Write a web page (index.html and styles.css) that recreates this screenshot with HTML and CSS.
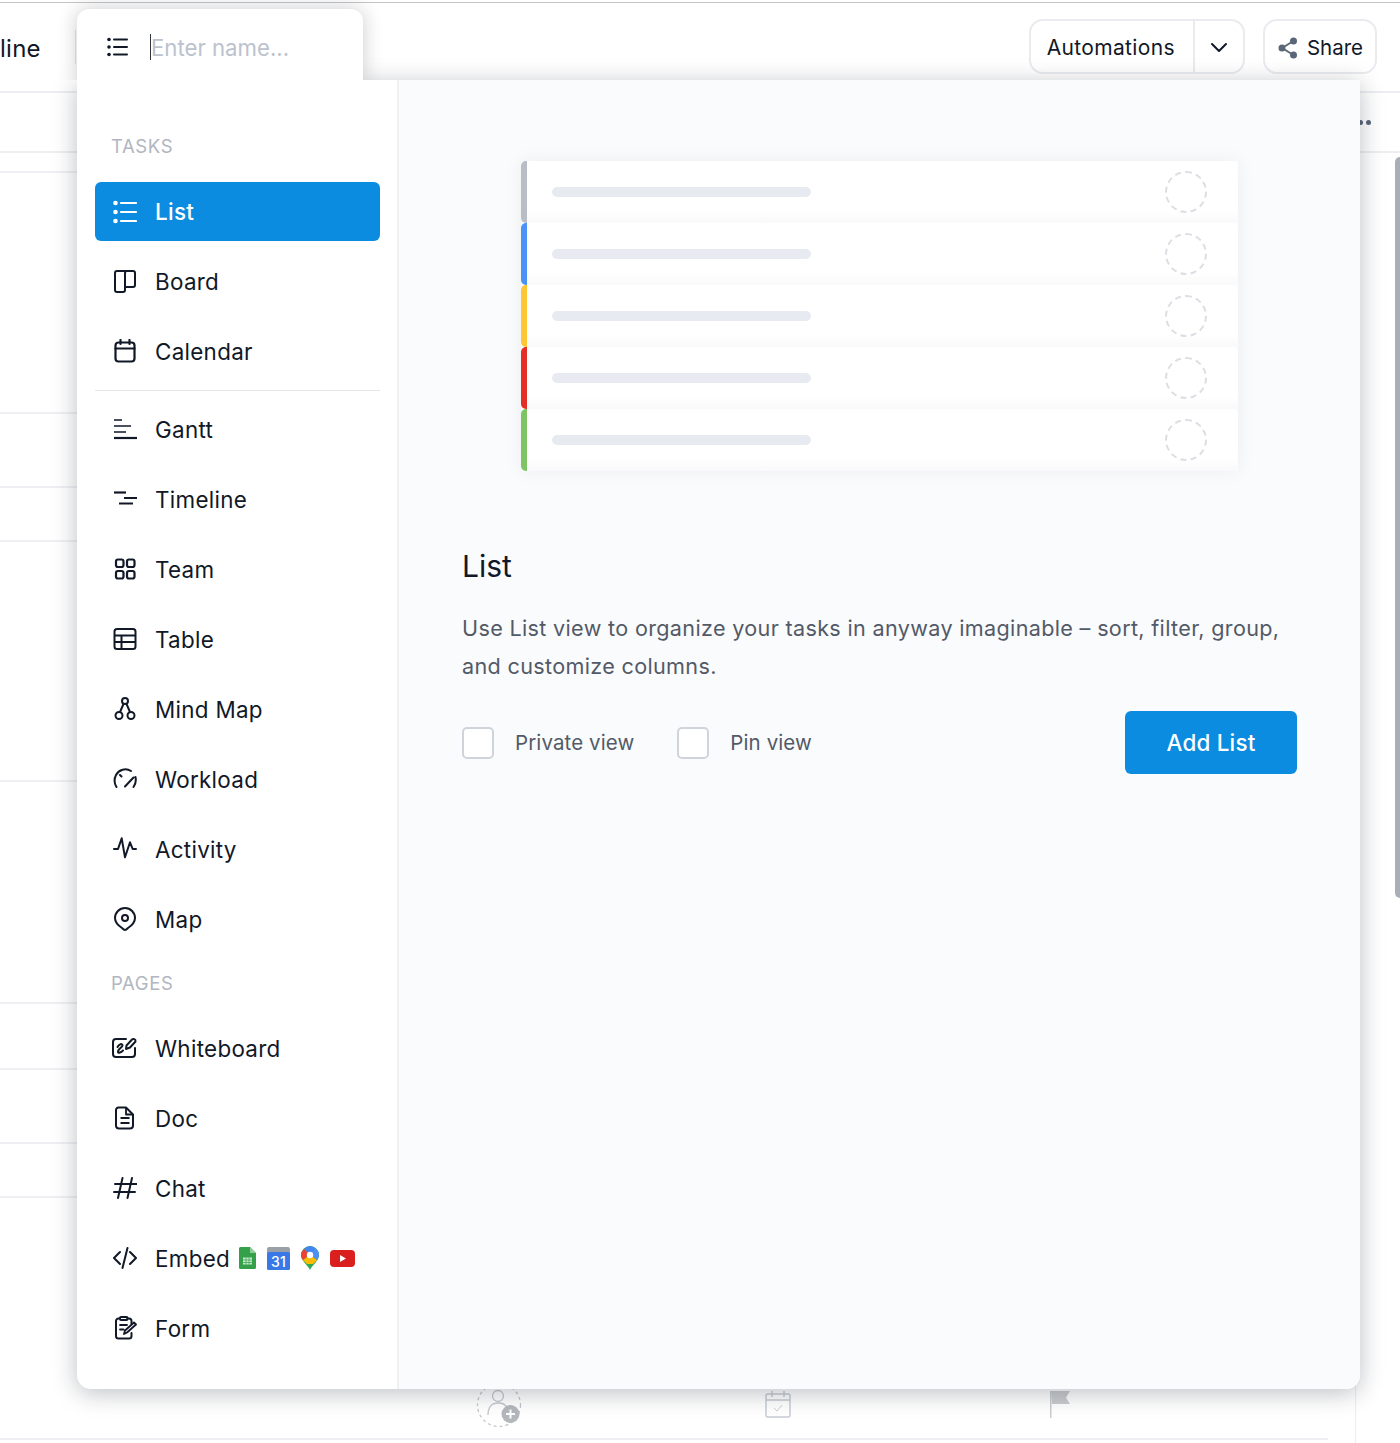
FILE: index.html
```html
<!DOCTYPE html>
<html lang="en">
<head>
    <meta charset="UTF-8">
    <meta name="viewport" content="width=device-width, initial-scale=1.0">
    <title>Add View</title>
    <link rel="stylesheet" href="styles.css">
</head>
<body>
    <div class="page">
        <header class="topbar">
            <div class="topbar-left">
                <span class="view-name">line</span>
                <span class="topbar-sep"></span>
            </div>
            <div class="topbar-right">
                <div class="btn-group">
                    <button class="btn-plain">Automations</button>
                    <button class="btn-caret">
                        <svg width="18" height="18" viewBox="0 0 18 18" fill="none" stroke="#111827" stroke-width="2" stroke-linecap="round" stroke-linejoin="round"><path d="M2 6l7 7 7-7"/></svg>
                    </button>
                </div>
                <button class="btn-share">
                    <svg width="20" height="22" viewBox="0 0 20 22" fill="#5b6678"><circle cx="15.500" cy="4" r="3.500"/><circle cx="4" cy="11" r="3.500"/><circle cx="15.500" cy="18" r="3.500"/><path d="M4 11L15.500 4M4 11l11.500 7" stroke="#5b6678" stroke-width="2"/></svg>
                    Share
                </button>
            </div>
        </header>
        <div class="toolbar">
            <span class="dots"><i></i><i></i></span>
        </div>
        <div class="list-bg">
            <div class="bg-row"></div>
            <div class="bg-row"></div>
            <div class="bg-row"></div>
            <div class="bg-row"></div>
            <div class="bg-row"></div>
            <div class="bg-row"></div>
            <div class="bg-row"></div>
            <div class="bg-row"></div>
            <div class="bg-row"></div>
            <div class="bg-row bg-row-icons">
                <svg class="bg-person" width="46" height="40" viewBox="0 0 46 40" fill="none" stroke="#c4c7cc" stroke-width="1.300"><circle cx="23" cy="18" r="21.500" stroke-dasharray="3 3"/><circle cx="22" cy="9" r="5.500"/><path d="M12 28c0-8 4-12 10-12s8 2 9 5"/><circle cx="34.500" cy="27" r="9" fill="#b4b7bc" stroke="none"/><path d="M34.500 22.500v9M30 27h9" stroke="#fff" stroke-width="2"/></svg>
                <svg class="bg-cal" width="26" height="28" viewBox="0 0 26 28" fill="none" stroke="#c7ccd5" stroke-width="1.500"><rect x="1" y="4" width="24" height="23" rx="2"/><path d="M1 10h24M7 1v6M19 1v6"/><path d="M9 18l3 3 5-6" stroke-width="1"/></svg>
                <svg class="bg-flag" width="20" height="28" viewBox="0 0 20 28" fill="#c9cbcf"><path d="M1 1h19l-4 6.500 4 6.500H2z"/><rect x="0" y="1" width="1.500" height="27"/></svg>
            </div>
        </div>
        <div class="scrollbar"></div>

        <div class="popup">
            <div class="name-tab">
                <svg class="icon" width="24" height="24" viewBox="0 0 24 24" fill="none" stroke="#111827" stroke-width="2" stroke-linecap="round"><path d="M8 4.500h13M8 12h13M8 19.500h13"/><g fill="#111827" stroke="none"><circle cx="3" cy="4.500" r="1.800"/><circle cx="3" cy="12" r="1.800"/><circle cx="3" cy="19.500" r="1.800"/></g></svg>
                <input class="name-input" type="text" placeholder="Enter name...">
            </div>
            <div class="panel">
                <aside class="sidebar">
                    <div class="side-label side-label-first">TASKS</div>

                    <a class="side-item active">
                        <svg class="icon" width="24" height="24" viewBox="0 0 24 24" fill="none" stroke="#fff" stroke-width="2.200" stroke-linecap="round"><path d="M8 3h15M8 12h15M8 21h15"/><g fill="#fff" stroke="none"><circle cx="2.500" cy="3" r="2.300"/><circle cx="2.500" cy="12" r="2.300"/><circle cx="2.500" cy="21" r="2.300"/></g></svg>
                        List
                    </a>
                    <a class="side-item">
                        <svg class="icon" width="24" height="24" viewBox="0 0 24 24" fill="none" stroke="#111827" stroke-width="2" stroke-linejoin="round"><path d="M12 18h8a2 2 0 0 0 2-2V4a2 2 0 0 0-2-2H4a2 2 0 0 0-2 2v17a2 2 0 0 0 2 2h6a2 2 0 0 0 2-2V4a2 2 0 0 1 2-2"/></svg>
                        Board
                    </a>
                    <a class="side-item">
                        <svg class="icon" width="24" height="24" viewBox="0 0 24 24" fill="none" stroke="#111827" stroke-width="2.200" stroke-linecap="round"><rect x="2.500" y="3.500" width="19" height="19" rx="3"/><path d="M2.500 9.500h19M7.500 1v4M16.500 1v4"/></svg>
                        Calendar
                    </a>

                    <div class="side-divider"></div>

                    <a class="side-item">
                        <svg class="icon" width="24" height="24" viewBox="0 0 24 24" fill="none" stroke="#111827" stroke-width="2"><path d="M1 3h8M1 9h17M1 15h12" stroke-width="1.700"/><path d="M1 21h23" stroke-width="2.200"/></svg>
                        Gantt
                    </a>
                    <a class="side-item">
                        <svg class="icon" width="24" height="24" viewBox="0 0 24 24" fill="none" stroke="#111827"><path d="M1 5.500h12" stroke-width="2.200"/><path d="M11 11h13M6 16.500h14" stroke-width="1.800"/></svg>
                        Timeline
                    </a>
                    <a class="side-item">
                        <svg class="icon" width="24" height="24" viewBox="0 0 24 24" fill="none" stroke="#111827" stroke-width="2.200"><rect x="3" y="2.500" width="7.500" height="7.500" rx="2"/><rect x="14" y="2.500" width="7.500" height="7.500" rx="2"/><rect x="3" y="14" width="7.500" height="7.500" rx="2"/><rect x="14" y="14" width="7.500" height="7.500" rx="2"/></svg>
                        Team
                    </a>
                    <a class="side-item">
                        <svg class="icon" width="24" height="24" viewBox="0 0 24 24" fill="none" stroke="#111827" stroke-width="2"><rect x="1.500" y="2" width="21" height="20" rx="2.500"/><path d="M1.500 8.500h21M1.500 15h21M8.500 8.500V22"/></svg>
                        Table
                    </a>
                    <a class="side-item">
                        <svg class="icon" width="24" height="24" viewBox="0 0 24 24" fill="none" stroke="#111827" stroke-width="2"><circle cx="12" cy="4" r="3"/><circle cx="6" cy="18.500" r="3.500"/><circle cx="18" cy="18.500" r="3.500"/><path d="M10.500 7L7 15M13.500 7L17 15"/></svg>
                        Mind Map
                    </a>
                    <a class="side-item">
                        <svg class="icon" width="24" height="24" viewBox="0 0 24 24" fill="none" stroke="#111827" stroke-width="2" stroke-linecap="round"><path d="M3.500 20C1 16 1 12 3 8A10.500 10.500 0 0 1 18 4M22.500 10c.7 3.500.3 7-2 10M12 19.500l8.500-9M7 8l1.500 1.500"/></svg>
                        Workload
                    </a>
                    <a class="side-item">
                        <svg class="icon" width="24" height="24" viewBox="0 0 24 24" fill="none" stroke="#111827" stroke-width="2" stroke-linecap="round" stroke-linejoin="round"><path d="M1 12h4L8.700 1.300 12 20.300l5-15L19.700 12H23"/></svg>
                        Activity
                    </a>
                    <a class="side-item">
                        <svg class="icon" width="24" height="24" viewBox="0 0 24 24" fill="none" stroke="#111827" stroke-width="2" stroke-linejoin="round"><path d="M12 23c-1 0-2-1-3-2-3-2-7-5-7-10a10 10 0 0 1 20 0c0 5-4 8-7 10-1 1-2 2-3 2z"/><circle cx="12" cy="11" r="3"/></svg>
                        Map
                    </a>

                    <div class="side-label">PAGES</div>

                    <a class="side-item">
                        <svg class="icon icon-wide" width="27" height="23" viewBox="0 0 27 23" fill="none" stroke="#111827" stroke-width="2" stroke-linecap="round" stroke-linejoin="round"><path d="M15 2H5a3 3 0 0 0-3 3v12a3 3 0 0 0 3 3h16a3 3 0 0 0 3-3v-6"/><path d="M6.500 10c1.500-3 5-4 5-1.500 0 2-5 3.500-4.500 6.500.3 1.500 3 .5 5-1.500"/><path d="M15 12l.5-3.500 5.500-6c1-1 4-.5 3.500 2l-5.500 6z"/></svg>
                        Whiteboard
                    </a>
                    <a class="side-item">
                        <svg class="icon" width="24" height="24" viewBox="0 0 24 24" fill="none" stroke="#111827" stroke-width="2" stroke-linejoin="round"><path d="M5.500 1.500H13l7 7v11a3 3 0 0 1-3 3H6a3 3 0 0 1-3-3V4a2.500 2.500 0 0 1 2.500-2.500z"/><path d="M13 1.500V8.500h7M7.500 12h9M7.500 17h9" stroke-width="1.800"/></svg>
                        Doc
                    </a>
                    <a class="side-item">
                        <svg class="icon" width="24" height="24" viewBox="0 0 24 24" fill="none" stroke="#111827" stroke-width="2" stroke-linecap="round"><path d="M9.500 2L5 22M19 2l-4.500 20M2 8h22M1 16h21"/></svg>
                        Chat
                    </a>
                    <a class="side-item">
                        <svg class="icon" width="24" height="24" viewBox="0 0 24 24" fill="none" stroke="#111827" stroke-width="2" stroke-linecap="round" stroke-linejoin="round"><path d="M7 6l-6 6 6 6M17 6l6 6-6 6M14.500 2l-5 20"/></svg>
                        Embed
                        <span class="embed-logos">
                            <svg width="17" height="22" viewBox="0 0 17 22"><path d="M0 1.500A1.500 1.500 0 0 1 1.500 0H11l6 6v14.500a1.500 1.500 0 0 1-1.500 1.500h-14A1.500 1.500 0 0 1 0 20.500z" fill="#34a04a"/><path d="M11 0l6 6h-6z" fill="#8fcc9c"/><rect x="4" y="10.500" width="9" height="7" fill="#c6e6cc"/><path d="M4 13h9M4 15.500h9M7 10.500v7M10 10.500v7" stroke="#34a04a" stroke-width=".7"/></svg>
                            <svg class="logo-cal" width="23" height="23" viewBox="0 0 23 23"><path d="M0 6V2a2 2 0 0 1 2-2h19a2 2 0 0 1 2 2v4z" fill="#9aa0a8"/><rect y="5" width="23" height="18" rx="1.500" fill="#3b78e7"/><text x="11.500" y="20" class="logo-cal-num">31</text></svg>
                            <svg width="18" height="24" viewBox="0 0 18 24"><path d="M9 24C7 19 0 15 0 9a9 9 0 0 1 18 0c0 6-7 10-9 15z" fill="#34a853"/><path d="M3 3a9 9 0 0 1 6-3c2 0 4 1 5 2L9 9z" fill="#4285f4"/><path d="M3 3A9 9 0 0 0 0 9c0 2 1 4 2 5l7-5z" fill="#ea4335"/><path d="M14 2c2 1 4 4 4 7 0 2-1 3-2 5L9 9z" fill="#4f8ef7"/><path d="M2 14l7-5 7 5-4 4H6z" fill="#fbbc04"/><circle cx="9" cy="9" r="3.200" fill="#fff"/></svg>
                            <svg width="25" height="17" viewBox="0 0 25 17"><rect width="25" height="17" rx="4" fill="#d9201f"/><path d="M10 5l6 3.500-6 3.500z" fill="#fff"/></svg>
                        </span>
                    </a>
                    <a class="side-item">
                        <svg class="icon" width="24" height="24" viewBox="0 0 24 24" fill="none" stroke="#111827" stroke-width="2" stroke-linecap="round" stroke-linejoin="round"><path d="M18.500 8V5a2.500 2.500 0 0 0-2.500-2.500h-1.500M7 2.500H5.500A2.500 2.500 0 0 0 3 5v15a2.500 2.500 0 0 0 2.500 2.500H16a2.500 2.500 0 0 0 2.500-2.500v-3"/><rect x="7" y="1" width="7.500" height="3" rx="1"/><path d="M7 9h7M7 13.500h3.500M11 18l1-3.500 9-8 2 2-9 8z" stroke-width="1.800"/></svg>
                        Form
                    </a>
                </aside>

                <section class="detail">
                    <div class="preview">
                        <div class="preview-row strip-grey"><span class="preview-bar"></span><span class="preview-circle"></span></div>
                        <div class="preview-row strip-blue"><span class="preview-bar"></span><span class="preview-circle"></span></div>
                        <div class="preview-row strip-yellow"><span class="preview-bar"></span><span class="preview-circle"></span></div>
                        <div class="preview-row strip-red"><span class="preview-bar"></span><span class="preview-circle"></span></div>
                        <div class="preview-row strip-green"><span class="preview-bar"></span><span class="preview-circle"></span></div>
                    </div>
                    <h2 class="detail-title">List</h2>
                    <p class="detail-text">Use List view to organize your tasks in anyway imaginable – sort, filter, group, and customize columns.</p>
                    <div class="detail-actions">
                        <label class="check"><span class="check-box"></span>Private view</label>
                        <label class="check"><span class="check-box"></span>Pin view</label>
                        <button class="btn-add">Add List</button>
                    </div>
                </section>
            </div>
        </div>
    </div>
</body>
</html>
```

FILE: styles.css
```css
* {
    box-sizing: border-box;
}
body {
    margin: 0;
    font-family: Inter, "Liberation Sans", sans-serif;
    color: #111827;
    background-color: #fff;
}
button {
    font-family: inherit;
    background: none;
    border: 0;
    padding: 0;
    color: inherit;
}
.page {
    position: relative;
    height: 1443px;
    overflow: hidden;
    padding-top: 2px;
}

/* page behind the popup */
.topbar {
    height: 91px;
    display: flex;
    justify-content: space-between;
    align-items: center;
    padding: 0 23px 1px 0;
    border-top: 1px solid #c4c5c6;
    border-bottom: 2px solid #eceef1;
}
.topbar-left {
    display: flex;
    align-items: center;
}
.view-name {
    width: 75px;
    padding-top: 3px;
    font-size: 24px;
    letter-spacing: .25px;
}
.topbar-sep {
    width: 1px;
    height: 34px;
    background-color: #e3e5e9;
}
.topbar-right {
    display: flex;
    gap: 18px;
}
.btn-group, .btn-share {
    height: 55px;
    display: flex;
    align-items: center;
    border: 2px solid #e9ebef;
    border-radius: 14px;
}
.btn-plain {
    height: 100%;
    padding: 2px 18px 0 16px;
    font-size: 21px;
    letter-spacing: .35px;
    border-right: 2px solid #e9ebef;
}
.btn-caret {
    width: 48px;
    display: flex;
    justify-content: center;
}
.btn-share {
    gap: 9px;
    padding: 2px 12px 0 13px;
    font-size: 20.500px;
}
.toolbar {
    height: 60px;
    display: flex;
    justify-content: flex-end;
    align-items: center;
    padding-right: 29px;
    border-bottom: 2px solid #eceef1;
}
.dots {
    display: flex;
    gap: 3px;
}
.dots i {
    width: 5px;
    height: 5px;
    border-radius: 50%;
    background-color: #5b6678;
}
.list-bg {
    width: 1356px;
    height: 1290px;
    display: grid;
    grid-template-rows: 20px 241px 74px 54px 240px 222px 66px 74px 54px 242px;
    border-right: 1px solid #eceef1;
}
.bg-row {
    width: 1328px;
    border-bottom: 2px solid #eff0f3;
}
.bg-row-icons {
    display: flex;
    align-items: flex-end;
    padding: 0 0 11px 476px;
}
.bg-cal {
    margin: 0 0 9px 243px;
}
.bg-flag {
    margin: 0 0 9px 259px;
}
.scrollbar {
    position: absolute;
    left: 1395px;
    top: 157px;
    width: 10px;
    height: 741px;
    border-radius: 6px;
    background-color: #a9aeb8;
}

/* popup */
.popup {
    position: absolute;
    left: 77px;
    top: 9px;
    width: 1283px;
}
.name-tab {
    position: relative;
    z-index: 2;
    width: 286px;
    height: 71px;
    display: flex;
    align-items: center;
    gap: 20px;
    padding: 5px 0 0 29px;
    background-color: #fff;
    border-radius: 12px 12px 0 0;
    box-shadow: 0 0 20px rgba(17, 24, 39, .22);
    clip-path: inset(-30px -30px 0 -30px);
}
.name-input {
    width: 200px;
    height: 26px;
    padding: 0;
    border: 0;
    border-left: 1px solid #30343c;
    outline: 0;
    font-family: inherit;
    font-size: 22.200px;
    letter-spacing: 0;
}
.name-input::placeholder {
    color: #bcc2cd;
}
.panel {
    position: relative;
    z-index: 1;
    height: 1309px;
    display: flex;
    background-color: #fff;
    border-radius: 0 0 14px 14px;
    box-shadow: 0 4px 24px rgba(17, 24, 39, .28);
}

.sidebar {
    width: 322px;
    padding: 0 17px 0 18px;
    border-right: 2px solid #eef0f4;
}
.side-label {
    height: 59px;
    padding: 11px 0 0 16px;
    font-size: 18.500px;
    line-height: 24px;
    letter-spacing: .6px;
    color: #b1b6c0;
}
.side-label-first {
    height: 102px;
    padding-top: 54px;
}
.side-item {
    height: 60px;
    display: flex;
    align-items: center;
    gap: 18px;
    margin-bottom: 10px;
    padding: 0 0 2px 18px;
    font-size: 22.400px;
    letter-spacing: .3px;
    border-radius: 6px;
}
.side-item.active {
    height: 59px;
    margin-bottom: 11px;
    padding-bottom: 0;
    color: #fff;
    font-weight: 500;
    background-color: #0c8ce0;
}
.side-item .icon {
    flex: none;
}
.side-item .icon-wide {
    margin: 0 -1px 0 -2px;
}
.side-divider {
    height: 1px;
    margin: -2px 0 9px;
    background-color: #e4e6ea;
}
.embed-logos {
    display: flex;
    align-items: center;
    gap: 11px;
    margin-left: -9px;
}
.logo-cal-num {
    font-size: 14px;
    font-weight: 500;
    fill: #fff;
    text-anchor: middle;
}

.detail {
    flex: 1;
    padding: 81px 63px 0 63px;
    background-color: #fafbfd;
    border-radius: 0 0 14px 0;
}
.preview {
    width: 717px;
    margin-left: 59px;
    box-shadow: 0 0 18px rgba(17, 24, 39, .06);
}
.preview-row {
    height: 62px;
    display: flex;
    justify-content: space-between;
    align-items: center;
    padding: 0 31px 0 25px;
    background: linear-gradient(#fff 80%, #f9f9fb);
    border-left: 6px solid;
    border-radius: 5px;
}
.strip-grey { border-left-color: #b9bdc6; }
.strip-blue { border-left-color: #4b92f7; }
.strip-yellow { border-left-color: #fec633; }
.strip-red { border-left-color: #e32f26; }
.strip-green { border-left-color: #7ec364; }
.preview-bar {
    width: 259px;
    height: 10px;
    border-radius: 5px;
    background-color: #e7eaf1;
}
.preview-circle {
    width: 42px;
    height: 42px;
    border: 2px dashed #dcdee3;
    border-radius: 50%;
}
.detail-title {
    margin: 76px 0 0;
    font-size: 30px;
    line-height: 38px;
    font-weight: 400;
}
.detail-text {
    margin: 24px 0 0;
    font-size: 21.600px;
    line-height: 38px;
    letter-spacing: .33px;
    color: #535a67;
}
.detail-actions {
    display: flex;
    align-items: center;
    margin-top: 26px;
}
.check {
    display: flex;
    align-items: center;
    gap: 21px;
    margin-right: 43px;
    font-size: 20.500px;
    letter-spacing: .1px;
    color: #535a67;
}
.check-box {
    width: 32px;
    height: 32px;
    background-color: #fff;
    border: 2px solid #cfd3da;
    border-radius: 5px;
}
.btn-add {
    width: 172px;
    height: 63px;
    margin-left: auto;
    font-size: 22.400px;
    font-weight: 500;
    letter-spacing: .2px;
    color: #fff;
    background-color: #0c8ce0;
    border-radius: 6px;
}
```
